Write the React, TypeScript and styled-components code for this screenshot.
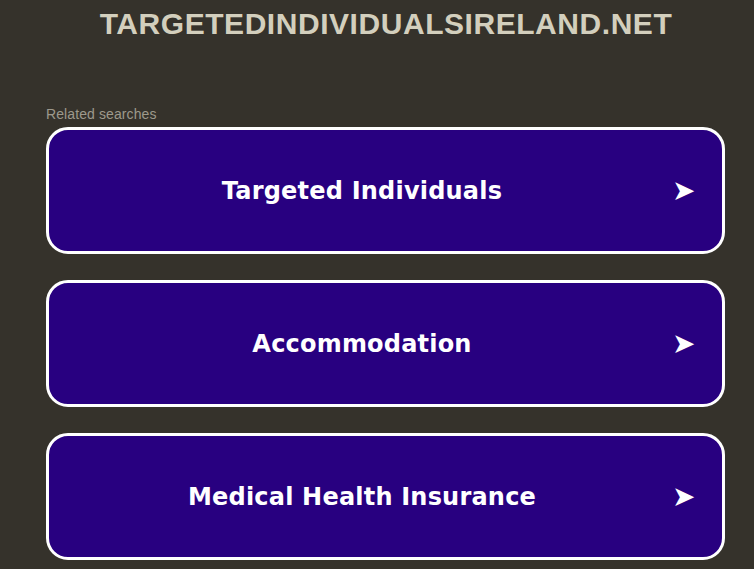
import styled, { createGlobalStyle } from "styled-components";

const GlobalStyle = createGlobalStyle`
  html, body {
    margin: 0;
    padding: 0;
    background: #35322b;
  }
`;

const links = ["Targeted Individuals", "Accommodation", "Medical Health Insurance"];

export default function App() {
  return (
    <>
      <GlobalStyle />
      <StyledPage>
        <StyledDomain>TARGETEDINDIVIDUALSIRELAND.NET</StyledDomain>
        <StyledRelated>
          <StyledLabel>Related searches</StyledLabel>
          <StyledList>
            {links.map((title) => (
              <StyledLink key={title} href="#">
                <StyledLinkText>{title}</StyledLinkText>
                <StyledArrow>➤</StyledArrow>
              </StyledLink>
            ))}
          </StyledList>
        </StyledRelated>
      </StyledPage>
    </>
  );
}

const StyledPage = styled.div`
  width: 754px;
  height: 569px;
  overflow: hidden;
  display: flex;
  flex-direction: column;
  align-items: center;
  font-family: "Liberation Sans", Arial, sans-serif;
`;

const StyledDomain = styled.h1`
  margin: 7px 0 0;
  padding-left: 18px;
  font-size: 30px;
  line-height: 34px;
  font-weight: bold;
  color: #d3cfbd;
  letter-spacing: 0.55px;
`;

const StyledRelated = styled.section`
  width: 679px;
  margin-top: 65px;
  align-self: flex-start;
  margin-left: 46px;
`;

const StyledLabel = styled.div`
  font-size: 14px;
  line-height: 17px;
  color: #9d998c;
  margin-bottom: 4px;
  letter-spacing: 0.1px;
`;

const StyledList = styled.div`
  display: flex;
  flex-direction: column;
  gap: 26px;
`;

const StyledLink = styled.a`
  box-sizing: border-box;
  height: 127px;
  display: flex;
  align-items: center;
  border: 3px solid #ffffff;
  border-radius: 22px;
  background: #280080;
  color: #ffffff;
  text-decoration: none;
  font-family: "DejaVu Sans", Verdana, sans-serif;
  font-weight: bold;
`;

const StyledLinkText = styled.span`
  flex: 1;
  text-align: center;
  font-size: 24px;
  line-height: 30px;
  letter-spacing: 0.2px;
  padding: 1px 0 0 3px;
`;

const StyledArrow = styled.span`
  width: 50px;
  font-size: 28px;
  line-height: 30px;
`;
